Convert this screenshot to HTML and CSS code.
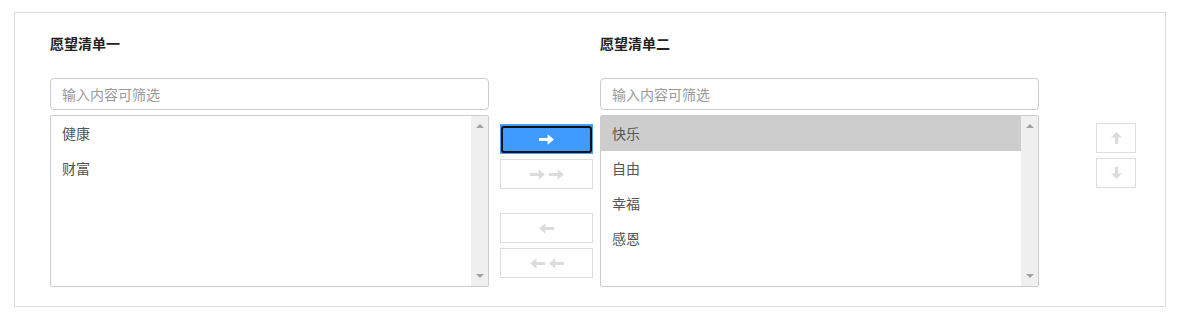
FILE: index.html
```html
<!DOCTYPE html>
<html lang="zh-CN">
<head>
  <meta charset="UTF-8">
  <meta name="viewport" content="width=device-width, initial-scale=1.0">
  <title>愿望清单</title>
  <link rel="stylesheet" href="styles.css">
</head>
<body>
  <div class="transfer">
    <div class="panel">
      <div class="panel-title">愿望清单一</div>
      <input class="filter" type="text" placeholder="输入内容可筛选">
      <div class="list">
        <ul class="items">
          <li>健康</li>
          <li>财富</li>
        </ul>
        <div class="scrollbar">
          <span class="sb-up"></span>
          <span class="sb-down"></span>
        </div>
      </div>
    </div>

    <div class="actions">
      <button class="move-btn active" title="移到右侧">
        <svg width="15" height="11" viewBox="0 0 14 10"><polygon points="0,3.5 8,3.5 8,0 14,5 8,10 8,6.5 0,6.5"/></svg>
      </button>
      <button class="move-btn" title="全部移到右侧">
        <svg width="15" height="11" viewBox="0 0 14 10"><polygon points="0,3.5 8,3.5 8,0 14,5 8,10 8,6.5 0,6.5"/></svg>
        <svg width="15" height="11" viewBox="0 0 14 10"><polygon points="0,3.5 8,3.5 8,0 14,5 8,10 8,6.5 0,6.5"/></svg>
      </button>
      <div class="spacer"></div>
      <button class="move-btn" title="移到左侧">
        <svg width="15" height="11" viewBox="0 0 14 10"><polygon points="14,3.5 6,3.5 6,0 0,5 6,10 6,6.5 14,6.5"/></svg>
      </button>
      <button class="move-btn" title="全部移到左侧">
        <svg width="15" height="11" viewBox="0 0 14 10"><polygon points="14,3.5 6,3.5 6,0 0,5 6,10 6,6.5 14,6.5"/></svg>
        <svg width="15" height="11" viewBox="0 0 14 10"><polygon points="14,3.5 6,3.5 6,0 0,5 6,10 6,6.5 14,6.5"/></svg>
      </button>
    </div>

    <div class="panel">
      <div class="panel-title">愿望清单二</div>
      <input class="filter" type="text" placeholder="输入内容可筛选">
      <div class="list">
        <ul class="items">
          <li class="selected">快乐</li>
          <li>自由</li>
          <li>幸福</li>
          <li>感恩</li>
        </ul>
        <div class="scrollbar">
          <span class="sb-up"></span>
          <span class="sb-down"></span>
        </div>
      </div>
    </div>

    <div class="sort">
      <button class="sort-btn" title="上移">
        <svg width="11" height="12" viewBox="0 0 10 11"><polygon points="5,0 10,5 6.5,5 6.5,11 3.5,11 3.5,5 0,5"/></svg>
      </button>
      <button class="sort-btn" title="下移">
        <svg width="11" height="12" viewBox="0 0 10 11"><polygon points="5,11 10,6 6.5,6 6.5,0 3.5,0 3.5,6 0,6"/></svg>
      </button>
    </div>
  </div>
</body>
</html>
```

FILE: styles.css
```css
body {
  margin: 0;
  padding: 12px 14px 0 14px;
  font-family: "Noto Sans CJK SC", "Liberation Sans", sans-serif;
  color: #333;
  background: #fff;
}
.transfer {
  display: flex;
  align-items: flex-start;
  border: 1px solid #ddd;
  padding: 20px 0 19px 35px;
}
.panel {
  width: 439px;
  display: flex;
  flex-direction: column;
}
.panel-title {
  height: 20px;
  line-height: 20px;
  font-size: 14px;
  font-weight: bold;
  color: #222;
  margin-bottom: 25px;
}
.filter {
  box-sizing: border-box;
  width: 100%;
  height: 32px;
  margin: 0 0 5px 0;
  padding: 0 11px;
  border: 1px solid #ccc;
  border-radius: 4px;
  font-family: inherit;
  font-size: 14px;
  color: #555;
  outline: none;
}
.filter::placeholder {
  color: #9a9a9a;
}
.list {
  box-sizing: border-box;
  height: 172px;
  border: 1px solid #ccc;
  border-radius: 2px;
  display: flex;
}
.items {
  flex: 1;
  list-style: none;
  margin: 0;
  padding: 0;
}
.items li {
  height: 35px;
  line-height: 35px;
  padding-left: 11px;
  font-size: 14px;
  color: #555;
}
.items li.selected {
  background: #cdcdcd;
}
.scrollbar {
  width: 17px;
  background: #f0f0f0;
  display: flex;
  flex-direction: column;
  justify-content: space-between;
  align-items: center;
  padding: 8px 0 8px 0;
}
.sb-up, .sb-down {
  width: 0;
  height: 0;
  border-left: 4px solid transparent;
  border-right: 4px solid transparent;
}
.sb-up {
  border-bottom: 4px solid #a3a3a3;
}
.sb-down {
  border-top: 4px solid #a3a3a3;
}
.actions {
  width: 93px;
  margin: 91px 7px 0 11px;
  display: flex;
  flex-direction: column;
  gap: 5px;
}
.actions .spacer {
  height: 14px;
}
.move-btn, .sort-btn {
  position: relative;
  height: 30px;
  padding: 0;
  background: #fff;
  border: 1px solid #ddd;
  display: flex;
  align-items: center;
  justify-content: center;
  gap: 4px;
  cursor: pointer;
}
.move-btn svg, .sort-btn svg {
  fill: #dcdcdc;
}
.move-btn.active {
  background: #3f9bff;
  border-color: #4aa0ff;
}
.move-btn.active svg {
  fill: #fff;
}
.move-btn.active::after {
  content: "";
  position: absolute;
  inset: 1px 0 0 0;
  border: 2px solid #111;
  border-radius: 3px;
}
.sort {
  margin: 90px 0 0 57px;
  display: flex;
  flex-direction: column;
  gap: 5px;
}
.sort-btn {
  width: 40px;
}
```
